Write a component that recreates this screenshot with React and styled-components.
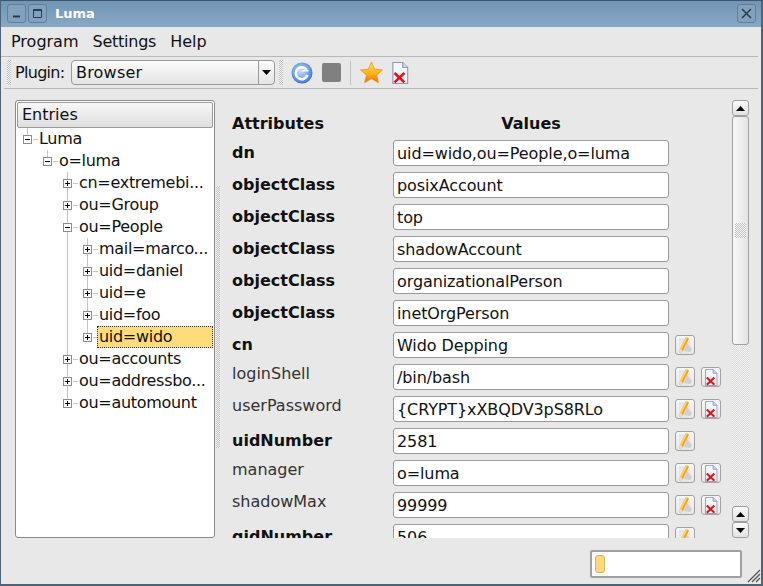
import React from "react"
import styled, { createGlobalStyle } from "styled-components"

const GlobalStyle = createGlobalStyle`
  html, body {
    margin: 0;
    padding: 0;
    background: #e8e8e8;
  }
  * {
    box-sizing: border-box;
  }
`

const Window = styled.div`
  width: 763px;
  height: 586px;
  display: flex;
  flex-direction: column;
  overflow: hidden;
  background: #e8e8e8;
  border: 1px solid #4d6378;
  border-top-color: #3f566c;
  border-right-width: 2px;
  border-bottom-width: 2px;
  font-family: "DejaVu Sans", sans-serif;
  font-size: 16px;
  color: #111;
`

const TitleBar = styled.div`
  flex: 0 0 26px;
  display: flex;
  align-items: center;
  padding: 0 5px 2px 6px;
  gap: 2px;
  background: linear-gradient(#7295b5, #88a9c5);
`

const TitleButton = styled.div`
  width: 19px;
  height: 19px;
  border: 1px solid #5f7f9b;
  border-radius: 3px;
  background: #81a1bd;
  display: flex;
  align-items: center;
  justify-content: center;
`

const TitleText = styled.div`
  flex: 1;
  margin-left: 6px;
  color: #fff;
  font-size: 13px;
  font-weight: bold;
`

const MenuBar = styled.div`
  flex: 0 0 30px;
  display: flex;
  align-items: center;
  gap: 14px;
  margin-right: 3px;
  padding: 0 0 0 10px;
  border-bottom: 1px solid #b8b8b8;
`

const MenuItem = styled.span`
  letter-spacing: ${(p) => (p.$tight ? "-0.25px" : "0")};
`

const ToolBar = styled.div`
  flex: 0 0 32px;
  display: flex;
  align-items: center;
  margin: 0 3px;
  padding-left: 3px;
  border-bottom: 1px solid #b8b8b8;
`

const Handle = styled.div`
  width: 4px;
  height: 25px;
  margin-right: ${(p) => p.$after}px;
  background: repeating-conic-gradient(#c4c4c4 0 25%, #efefef 0 50%) 0 0 / 2px 2px;
`

const PluginLabel = styled.span`
  width: 56px;
  letter-spacing: -0.7px;
`

const Combo = styled.div`
  width: 204px;
  height: 25px;
  display: flex;
  border: 1px solid #9a9a9a;
  border-radius: 4px;
  background: linear-gradient(#fbfbfb, #e4e4e4);
  margin-right: 4px;
`

const ComboText = styled.div`
  flex: 1;
  padding-left: 4px;
  line-height: 23px;
  letter-spacing: 0.2px;
`

const ComboArrow = styled.div`
  width: 16px;
  border-left: 1px solid #9a9a9a;
  display: flex;
  align-items: center;
  justify-content: center;
`

const ToolIcon = styled.div`
  display: flex;
  align-items: center;
  justify-content: center;
  width: ${(p) => p.$w}px;
  margin-right: ${(p) => p.$gap}px;
`

const ToolSeparator = styled.div`
  width: 1px;
  height: 24px;
  margin: 0 9px 0 9px;
  background: #c0c0c0;
`

const StopSquare = styled.div`
  width: 19px;
  height: 19px;
  border-radius: 2px;
  background: #808080;
`

const Main = styled.div`
  flex: 1;
  min-height: 0;
  display: flex;
  padding: 11px 0 0 14px;
`

const TreePanel = styled.div`
  width: 200px;
  height: 438px;
  border: 1px solid #8a8a8a;
  border-radius: 3px;
  background: #fff;
  overflow: hidden;
`

const TreeHeader = styled.div`
  height: 26px;
  margin: 1px 1px 0;
  padding-left: 4px;
  line-height: 24px;
  border: 1px solid #9a9a9a;
  border-radius: 2px;
  background: linear-gradient(#f8f8f8, #dedede);
`

const TreeList = styled.ul`
  list-style: none;
  margin: 0 0 0 ${(p) => (p.$root ? 7 : 20)}px;
  padding: 0;
`

const TreeItem = styled.li`
  position: relative;

  &::before {
    content: "";
    position: absolute;
    left: 4px;
    top: 0;
    bottom: 0;
    width: 1px;
    background: #c4c4c4;
  }

  &:last-child::before {
    bottom: auto;
    height: 11px;
  }
`

const TreeRow = styled.div`
  position: relative;
  height: 22px;
  display: flex;
  align-items: center;
`

const Expander = styled.div`
  position: relative;
  z-index: 1;
  flex: 0 0 9px;
  height: 9px;
  border: 1px solid #8c8c8c;
  background: #fff;
  margin-right: 1px;

  &::before {
    content: "";
    position: absolute;
    left: 1px;
    top: 3px;
    width: 5px;
    height: 1px;
    background: #000;
  }

  &::after {
    content: ${(p) => (p.$open ? "none" : '""')};
    position: absolute;
    left: 3px;
    top: 1px;
    width: 1px;
    height: 5px;
    background: #000;
  }
`

const Dash = styled.div`
  flex: 0 0 5px;
  height: 1px;
  background: #c4c4c4;
`

const NodeLabel = styled.div`
  height: 22px;
  line-height: 20px;
  white-space: nowrap;
  letter-spacing: -0.3px;
  margin-left: -1px;
  padding: 0 1px;
  border: ${(p) => (p.$selected ? "1px dotted #333" : "1px solid transparent")};
  background: ${(p) => (p.$selected ? "#fddc7c" : "transparent")};
  ${(p) => (p.$selected ? "width: 116px;" : "")}
`

const Splitter = styled.div`
  flex: 0 0 4px;
  height: 262px;
  margin: 86px 12px 0 1px;
  background: repeating-conic-gradient(#c4c4c4 0 25%, #efefef 0 50%) 0 0 / 2px 2px;
`

const AttributeArea = styled.div`
  width: 500px;
  height: 438px;
  overflow: hidden;
`

const AttributeGrid = styled.div`
  display: grid;
  grid-template-columns: 161px 276px 26px 26px;
  grid-template-rows: 37px;
  grid-auto-rows: 32px;
  align-items: center;
`

const HeadCell = styled.div`
  align-self: start;
  padding-top: 14px;
  font-weight: bold;
  text-align: ${(p) => (p.$center ? "center" : "left")};
  grid-column: ${(p) => (p.$center ? "2" : "1")};
`

const HeadSpacer = styled.div`
  grid-column: 3 / 5;
`

const AttrName = styled.div`
  font-weight: ${(p) => (p.$bold ? "bold" : "normal")};
  color: ${(p) => (p.$bold ? "#111" : "#333")};
  margin-top: ${(p) => (p.$bold ? "-2px" : "-7px")};
`

const ValueInput = styled.input`
  width: 276px;
  height: 26px;
  padding: 0 3px;
  border: 1px solid #9a9a9a;
  border-radius: 3px;
  background: #fff;
  font-family: "DejaVu Sans", sans-serif;
  font-size: 16px;
  letter-spacing: -0.1px;
  color: #111;
  outline: none;
`

const SmallButton = styled.div`
  width: 20px;
  height: 20px;
  margin-left: 6px;
  border: 1px solid #a2a2a2;
  border-radius: 3px;
  background: linear-gradient(#f7f7f7, #e6e6e6);
  display: flex;
  align-items: center;
  justify-content: center;
`

const Scrollbar = styled.div`
  width: 17px;
  height: 438px;
  display: flex;
  flex-direction: column;
  background: repeating-conic-gradient(#dadada 0 25%, #f3f3f3 0 50%) 0 0 / 2px 2px;
`

const ScrollButton = styled.div`
  flex: 0 0 ${(p) => p.$h}px;
  border: 1px solid #a0a0a0;
  border-radius: 3px;
  background: linear-gradient(#fafafa, #e2e2e2);
  display: flex;
  align-items: center;
  justify-content: center;
`

const ScrollThumb = styled.div`
  flex: 0 0 229px;
  border: 1px solid #a0a0a0;
  border-radius: 3px;
  background: linear-gradient(90deg, #f8f8f8, #e4e4e4);
  display: flex;
  align-items: center;
  justify-content: center;
`

const ThumbGrip = styled.div`
  width: 11px;
  height: 15px;
  background: repeating-conic-gradient(#c4c4c4 0 25%, #f4f4f4 0 50%) 0 0 / 2px 2px;
`

const ScrollTrack = styled.div`
  flex: 1;
`

const StatusBar = styled.div`
  flex: 0 0 47px;
  display: flex;
  justify-content: flex-end;
  align-items: flex-start;
  padding: 13px 0 0 0;
  gap: 5px;
`

const ProgressBox = styled.div`
  width: 152px;
  height: 28px;
  padding: 3px;
  border: 2px solid #a0a0a0;
  border-radius: 2px;
  background: #fff;
`

const ProgressChunk = styled.div`
  width: 10px;
  height: 100%;
  border: 1px solid #d9b868;
  border-radius: 3px;
  background: #fdd97a;
`

const GripSlot = styled.div`
  align-self: flex-end;
  width: 14px;
  height: 14px;
  margin-bottom: 1px;
  line-height: 0;
`

const Arrow = ({ dir = "down" }) => (
  <svg width="9" height="5" viewBox="0 0 9 5">
    <path d={dir === "up" ? "M4.5 0L9 5H0Z" : "M0 0H9L4.5 5Z"} fill="#000" />
  </svg>
)

const PencilIcon = () => (
  <svg width="18" height="18" viewBox="0 0 18 18">
    <path d="M3 2h8l3 3v12H3z" fill="#e4e6ee" />
    <path d="M11 7l5 6-2 3-6-1z" fill="#c8c8c8" opacity="0.75" />
    <path d="M10 1l3 1.500L7 15l-3.500 2L4 13z" fill="#f6a21c" />
    <path d="M10 1l1.300.7L5 14.500 4 13z" fill="#ffd65c" />
    <path d="M4 13l3 2-3.500 2z" fill="#f6deb2" />
  </svg>
)

const DeleteDocIcon = ({ w = 18, h = 22 }) => (
  <svg width={w} height={h} viewBox="0 0 16 20">
    <path d="M1.500 .5h9l4.500 4.500v14.500h-13.500z" fill="#f4f6fb" stroke="#8d97b3" />
    <path d="M10.500 .5v4.500h4.500" fill="#d4d9e6" stroke="#8d97b3" />
    <path d="M3 10l9 8.500M12 10l-9 8.500" stroke="#ee0d12" strokeWidth="2.400" fill="none" />
  </svg>
)

const ReloadIcon = () => (
  <svg width="22" height="22" viewBox="0 0 22 22">
    <defs>
      <radialGradient id="reloadFill" cx="0.45" cy="0.4" r="0.65">
        <stop offset="0" stopColor="#cfe0fa" />
        <stop offset="0.6" stopColor="#6f9fe8" />
        <stop offset="1" stopColor="#2f67cf" />
      </radialGradient>
    </defs>
    <circle cx="11" cy="11" r="10.500" fill="url(#reloadFill)" />
    <path d="M15.500 7.500A6 6 0 1 0 16.500 13" fill="none" stroke="#fff" strokeWidth="2.600" />
    <path d="M10 9.500h7.500v-1.500l-3.500 -1z" fill="#fff" />
  </svg>
)

const StarIcon = () => (
  <svg width="23" height="23" viewBox="0 0 24 24">
    <defs>
      <linearGradient id="starFill" x1="0" y1="0" x2="0" y2="1">
        <stop offset="0" stopColor="#ffe24a" />
        <stop offset="0.55" stopColor="#ffb316" />
        <stop offset="1" stopColor="#f06a08" />
      </linearGradient>
    </defs>
    <path
      d="M12 1l3.300 7.500 8.200.8-6.200 5.400 1.900 8L12 18.400 4.800 22.700l1.900-8L.5 9.300l8.200-.8z"
      fill="url(#starFill)"
      stroke="#e58a10"
      strokeWidth="0.7"
    />
  </svg>
)

const ResizeGrip = () => (
  <svg width="14" height="14" viewBox="0 0 14 14">
    <path d="M13 1L1 13M13 5L5 13M13 9L9 13" stroke="#555" strokeWidth="1.300" fill="none" />
  </svg>
)

const tree = {
  label: "Luma",
  open: true,
  children: [
    {
      label: "o=luma",
      open: true,
      children: [
        { label: "cn=extremebi..." },
        { label: "ou=Group" },
        {
          label: "ou=People",
          open: true,
          children: [
            { label: "mail=marco..." },
            { label: "uid=daniel" },
            { label: "uid=e" },
            { label: "uid=foo" },
            { label: "uid=wido", selected: true },
          ],
        },
        { label: "ou=accounts" },
        { label: "ou=addressbo..." },
        { label: "ou=automount" },
      ],
    },
  ],
}

const attributes = [
  { name: "dn", value: "uid=wido,ou=People,o=luma", bold: true },
  { name: "objectClass", value: "posixAccount", bold: true },
  { name: "objectClass", value: "top", bold: true },
  { name: "objectClass", value: "shadowAccount", bold: true },
  { name: "objectClass", value: "organizationalPerson", bold: true },
  { name: "objectClass", value: "inetOrgPerson", bold: true },
  { name: "cn", value: "Wido Depping", bold: true, edit: true },
  { name: "loginShell", value: "/bin/bash", edit: true, del: true },
  { name: "userPassword", value: "{CRYPT}xXBQDV3pS8RLo", edit: true, del: true },
  { name: "uidNumber", value: "2581", bold: true, edit: true },
  { name: "manager", value: "o=luma", edit: true, del: true },
  { name: "shadowMax", value: "99999", edit: true, del: true },
  { name: "gidNumber", value: "506", bold: true, edit: true },
]

const TreeNode = ({ node }) => (
  <TreeItem>
    <TreeRow>
      <Expander $open={node.open} />
      <Dash />
      <NodeLabel $selected={node.selected}>{node.label}</NodeLabel>
    </TreeRow>
    {node.children ? (
      <TreeList>
        {node.children.map((child) => (
          <TreeNode key={child.label} node={child} />
        ))}
      </TreeList>
    ) : null}
  </TreeItem>
)

const App = () => {
  return (
    <Window>
      <GlobalStyle />
      <TitleBar>
        <TitleButton>
          <svg width="9" height="9" viewBox="0 0 9 9">
            <path d="M1 7.500h7" stroke="#2c3b4a" strokeWidth="2" />
          </svg>
        </TitleButton>
        <TitleButton>
          <svg width="9" height="9" viewBox="0 0 9 9">
            <path d="M.5 .5h8v8h-8zM.5 1.500h8" stroke="#2c3b4a" fill="none" />
          </svg>
        </TitleButton>
        <TitleText>Luma</TitleText>
        <TitleButton>
          <svg width="11" height="11" viewBox="0 0 11 11">
            <path d="M1 1l9 9M10 1l-9 9" stroke="#2c3b4a" strokeWidth="1.500" />
          </svg>
        </TitleButton>
      </TitleBar>

      <MenuBar>
        <MenuItem>Program</MenuItem>
        <MenuItem $tight>Settings</MenuItem>
        <MenuItem>Help</MenuItem>
      </MenuBar>

      <ToolBar>
        <Handle $after={4} />
        <PluginLabel>Plugin:</PluginLabel>
        <Combo>
          <ComboText>Browser</ComboText>
          <ComboArrow>
            <Arrow />
          </ComboArrow>
        </Combo>
        <Handle $after={8} />
        <ToolIcon $w={22} $gap={8}>
          <ReloadIcon />
        </ToolIcon>
        <ToolIcon $w={20} $gap={0}>
          <StopSquare />
        </ToolIcon>
        <ToolSeparator />
        <ToolIcon $w={23} $gap={8}>
          <StarIcon />
        </ToolIcon>
        <ToolIcon $w={18} $gap={0}>
          <DeleteDocIcon />
        </ToolIcon>
      </ToolBar>

      <Main>
        <TreePanel>
          <TreeHeader>Entries</TreeHeader>
          <TreeList $root>
            <TreeNode node={tree} />
          </TreeList>
        </TreePanel>
        <Splitter />
        <AttributeArea>
          <AttributeGrid>
            <HeadCell>Attributes</HeadCell>
            <HeadCell $center>Values</HeadCell>
            <HeadSpacer />
            {attributes.map((attr, index) => (
              <React.Fragment key={index}>
                <AttrName $bold={attr.bold}>{attr.name}</AttrName>
                <ValueInput readOnly value={attr.value} />
                {attr.edit ? (
                  <SmallButton>
                    <PencilIcon />
                  </SmallButton>
                ) : (
                  <span />
                )}
                {attr.del ? (
                  <SmallButton>
                    <DeleteDocIcon w={14} h={17} />
                  </SmallButton>
                ) : (
                  <span />
                )}
              </React.Fragment>
            ))}
          </AttributeGrid>
        </AttributeArea>
        <Scrollbar>
          <ScrollButton $h={16}>
            <Arrow dir="up" />
          </ScrollButton>
          <ScrollThumb>
            <ThumbGrip />
          </ScrollThumb>
          <ScrollTrack />
          <ScrollButton $h={16}>
            <Arrow dir="up" />
          </ScrollButton>
          <ScrollButton $h={16}>
            <Arrow />
          </ScrollButton>
        </Scrollbar>
      </Main>

      <StatusBar>
        <ProgressBox>
          <ProgressChunk />
        </ProgressBox>
        <GripSlot>
          <ResizeGrip />
        </GripSlot>
      </StatusBar>
    </Window>
  )
}

export default App
